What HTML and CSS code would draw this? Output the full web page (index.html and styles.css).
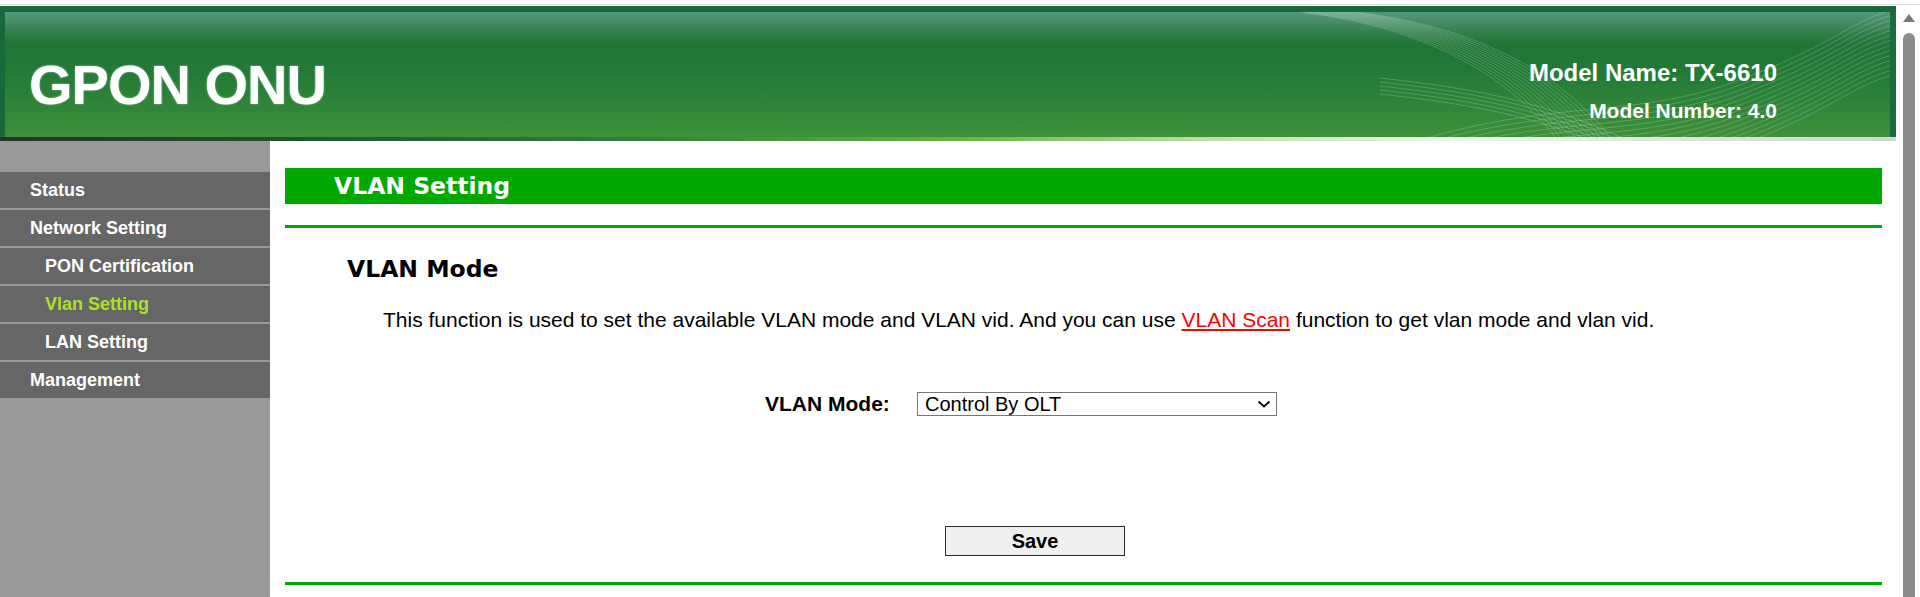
FILE: index.html
```html
<!DOCTYPE html>
<html lang="en">
<head>
  <meta charset="UTF-8">
  <meta name="viewport" content="width=device-width, initial-scale=1.0">
  <title>GPON ONU - VLAN Setting</title>
  <link rel="stylesheet" href="styles.css">
</head>
<body>
  <div class="topline"></div>
  <div class="window">
    <div class="page">
      <div class="header">
        <!-- decorative wave lines on the right of the banner -->
        <svg class="waves" viewBox="5 12 1885 125" preserveAspectRatio="none">
          <defs>
            <path id="sweep" d="M1300,12 C1400,24 1495,60 1555,137"/>
            <path id="rise" d="M1430,137 C1560,100 1640,118 1740,80 S1850,20 1900,8"/>
            <path id="low" d="M1380,78 C1470,88 1540,100 1620,137"/>
          </defs>
          <g class="wave-lines">
            <use href="#sweep"/>
            <use href="#sweep" transform="translate(5,0)"/>
            <use href="#sweep" transform="translate(10,0)"/>
            <use href="#sweep" transform="translate(15,0)"/>
            <use href="#sweep" transform="translate(20,0)"/>
            <use href="#sweep" transform="translate(25,0)"/>
            <use href="#sweep" transform="translate(30,0)"/>
            <use href="#sweep" transform="translate(35,0)"/>
            <use href="#sweep" transform="translate(40,0)"/>
            <use href="#sweep" transform="translate(45,0)"/>
            <use href="#sweep" transform="translate(50,0)"/>
            <use href="#sweep" transform="translate(55,0)"/>
            <use href="#rise"/>
            <use href="#rise" transform="translate(0,5)"/>
            <use href="#rise" transform="translate(0,10)"/>
            <use href="#rise" transform="translate(0,15)"/>
            <use href="#rise" transform="translate(0,20)"/>
            <use href="#rise" transform="translate(0,25)"/>
            <use href="#rise" transform="translate(0,30)"/>
            <use href="#rise" transform="translate(0,35)"/>
            <use href="#rise" transform="translate(0,40)"/>
            <use href="#rise" transform="translate(0,45)"/>
            <use href="#rise" transform="translate(0,50)"/>
            <use href="#rise" transform="translate(0,55)"/>
            <use href="#rise" transform="translate(0,60)"/>
            <use href="#rise" transform="translate(0,65)"/>
            <use href="#low"/>
            <use href="#low" transform="translate(0,4)"/>
            <use href="#low" transform="translate(0,8)"/>
            <use href="#low" transform="translate(0,12)"/>
            <use href="#low" transform="translate(0,16)"/>
          </g>
        </svg>
        <div class="logo">GPON ONU</div>
        <div class="model">
          <div class="model-name">Model Name: TX-6610</div>
          <div class="model-number">Model Number: 4.0</div>
        </div>
      </div>
      <div class="header-strip"></div>

      <div class="main">
        <div class="sidebar">
          <ul class="menu">
            <li class="menu-item">Status</li>
            <li class="menu-item">Network Setting</li>
            <li class="menu-item sub">PON Certification</li>
            <li class="menu-item sub active">Vlan Setting</li>
            <li class="menu-item sub">LAN Setting</li>
            <li class="menu-item">Management</li>
          </ul>
        </div>

        <div class="content">
          <div class="title-bar">VLAN Setting</div>
          <div class="green-line"></div>

          <h2 class="section-title">VLAN Mode</h2>
          <p class="description">This function is used to set the available VLAN mode and VLAN vid. And you can use <a href="#" class="scan-link">VLAN Scan</a> function to get vlan mode and vlan vid.</p>

          <div class="mode-row">
            <label for="vlanMode" class="mode-label">VLAN Mode:</label>
            <span class="select-wrap">
              <select id="vlanMode" class="mode-select">
                <option>Control By OLT</option>
                <option>Transparent</option>
                <option>Tag</option>
              </select>
              <svg class="select-arrow" width="14" height="8" viewBox="0 0 14 8">
                <path d="M1.5 1.5 L7 6.5 L12.5 1.5" fill="none" stroke="#111" stroke-width="2"/>
              </svg>
            </span>
          </div>

          <div class="button-row">
            <button class="save-button">Save</button>
          </div>
          <div class="green-line bottom"></div>
        </div>
      </div>
    </div>

    <div class="scrollbar">
      <div class="scroll-arrow"></div>
      <div class="scroll-thumb"></div>
    </div>
  </div>
</body>
</html>
```

FILE: styles.css
```css
html, body {
  margin: 0;
  height: 597px;
  overflow: hidden;
  background: #fff;
}
body {
  font-family: "Liberation Sans", Arial, sans-serif;
}
.topline {
  height: 4px;
  border-bottom: 1px solid #dcdcdc;
}
.window {
  display: flex;
  height: 592px;
}
.page {
  width: 1901px;
  padding-top: 1px;
  display: flex;
  flex-direction: column;
}

/* banner */
.header {
  position: relative;
  width: 1896px;
  height: 131px;
  box-sizing: border-box;
  border-top: 6px solid #17683a;
  border-left: 5px solid #17683a;
  border-right: 6px solid #1b6d3b;
  background: linear-gradient(to bottom, #55977a 0, #4a8f68 8px, #2f7d48 22px, #1f7436 34px, #237a37 60px, #2f8538 95px, #3d9139 125px);
  display: flex;
  justify-content: space-between;
  align-items: flex-start;
  color: #fff;
}
.waves {
  position: absolute;
  left: 0;
  top: 0;
  width: 1885px;
  height: 125px;
}
.wave-lines {
  fill: none;
  stroke: rgba(255, 255, 255, 0.2);
  stroke-width: 1;
}
.logo {
  position: relative;
  margin: 45px 0 0 24px;
  font-size: 56px;
  line-height: 56px;
  font-weight: bold;
  letter-spacing: -1px;
  text-shadow: 0 0 2px rgba(255, 255, 255, 0.6);
}
.model {
  position: relative;
  margin-top: 47px;
  padding-right: 113px;
  text-align: right;
  font-weight: bold;
}
.model-name {
  font-size: 24px;
  line-height: 28px;
}
.model-number {
  margin-top: 12px;
  font-size: 21px;
  line-height: 24px;
}
.header-strip {
  width: 1896px;
  height: 4px;
  background: linear-gradient(to right, #2e2e2e 0, #1c5534 300px, #2f8238 650px, #5fb63a 950px, #b9dea6 1200px, #f0f4ee 1450px, #d4d4d4 1896px);
}

/* layout below banner */
.main {
  display: flex;
  flex: 1;
}
.sidebar {
  width: 270px;
  background: #999;
  padding-top: 31px;
}
.menu {
  list-style: none;
  margin: 0;
  padding: 0;
}
.menu-item {
  height: 36px;
  line-height: 36px;
  margin-bottom: 2px;
  padding-left: 30px;
  background: #666;
  color: #fff;
  font-size: 18px;
  font-weight: bold;
}
.menu-item.sub {
  padding-left: 45px;
}
.menu-item.active {
  color: #abe02c;
}

.content {
  width: 1597px;
  margin-left: 15px;
  padding-top: 27px;
}
.title-bar {
  height: 36px;
  line-height: 36px;
  padding-left: 49px;
  background: #00a800;
  color: #fff;
  font-family: "DejaVu Sans", Verdana, sans-serif;
  font-size: 23.5px;
  font-weight: bold;
}
.green-line {
  margin-top: 21px;
  height: 3px;
  background: #00a800;
}
.green-line.bottom {
  margin-top: 26px;
}
.section-title {
  margin: 27px 0 0;
  padding-left: 62px;
  font-family: "DejaVu Sans", Verdana, sans-serif;
  font-size: 23.5px;
  line-height: 28px;
  font-weight: bold;
  color: #000;
}
.description {
  margin: 25px 0 0;
  padding-left: 98px;
  font-size: 21px;
  line-height: 24px;
  color: #000;
}
.scan-link {
  color: #f00;
}

.mode-row {
  display: flex;
  align-items: center;
  height: 24px;
  margin-top: 60px;
  padding-left: 480px;
}
.mode-label {
  width: 152px;
  font-size: 21px;
  line-height: 24px;
  font-weight: bold;
}
.select-wrap {
  position: relative;
  display: flex;
}
.mode-select {
  appearance: none;
  width: 360px;
  height: 24px;
  box-sizing: border-box;
  border: 1px solid #767676;
  border-radius: 0;
  padding: 0 7px;
  background: #fff;
  color: #000;
  font-family: "Liberation Sans", Arial, sans-serif;
  font-size: 20px;
  line-height: 22px;
}
.select-arrow {
  position: absolute;
  right: 6px;
  top: 8px;
  pointer-events: none;
}

.button-row {
  margin-top: 110px;
  padding-left: 660px;
}
.save-button {
  width: 180px;
  height: 30px;
  border: 1px solid #2b2b2b;
  border-radius: 0;
  background: #efefef;
  color: #000;
  font-family: "Liberation Sans", Arial, sans-serif;
  font-size: 20px;
  font-weight: bold;
  padding: 0;
}

/* browser scrollbar */
.scrollbar {
  width: 19px;
  display: flex;
  flex-direction: column;
  align-items: flex-start;
}
.scroll-arrow {
  margin: 9px 0 0 2px;
  width: 0;
  height: 0;
  border-left: 6px solid transparent;
  border-right: 6px solid transparent;
  border-bottom: 8px solid #7a7a7a;
}
.scroll-thumb {
  margin: 11px 0 0 2px;
  width: 12px;
  flex: 1;
  border-radius: 6px 6px 0 0;
  background: #8b8b8b;
}
```
